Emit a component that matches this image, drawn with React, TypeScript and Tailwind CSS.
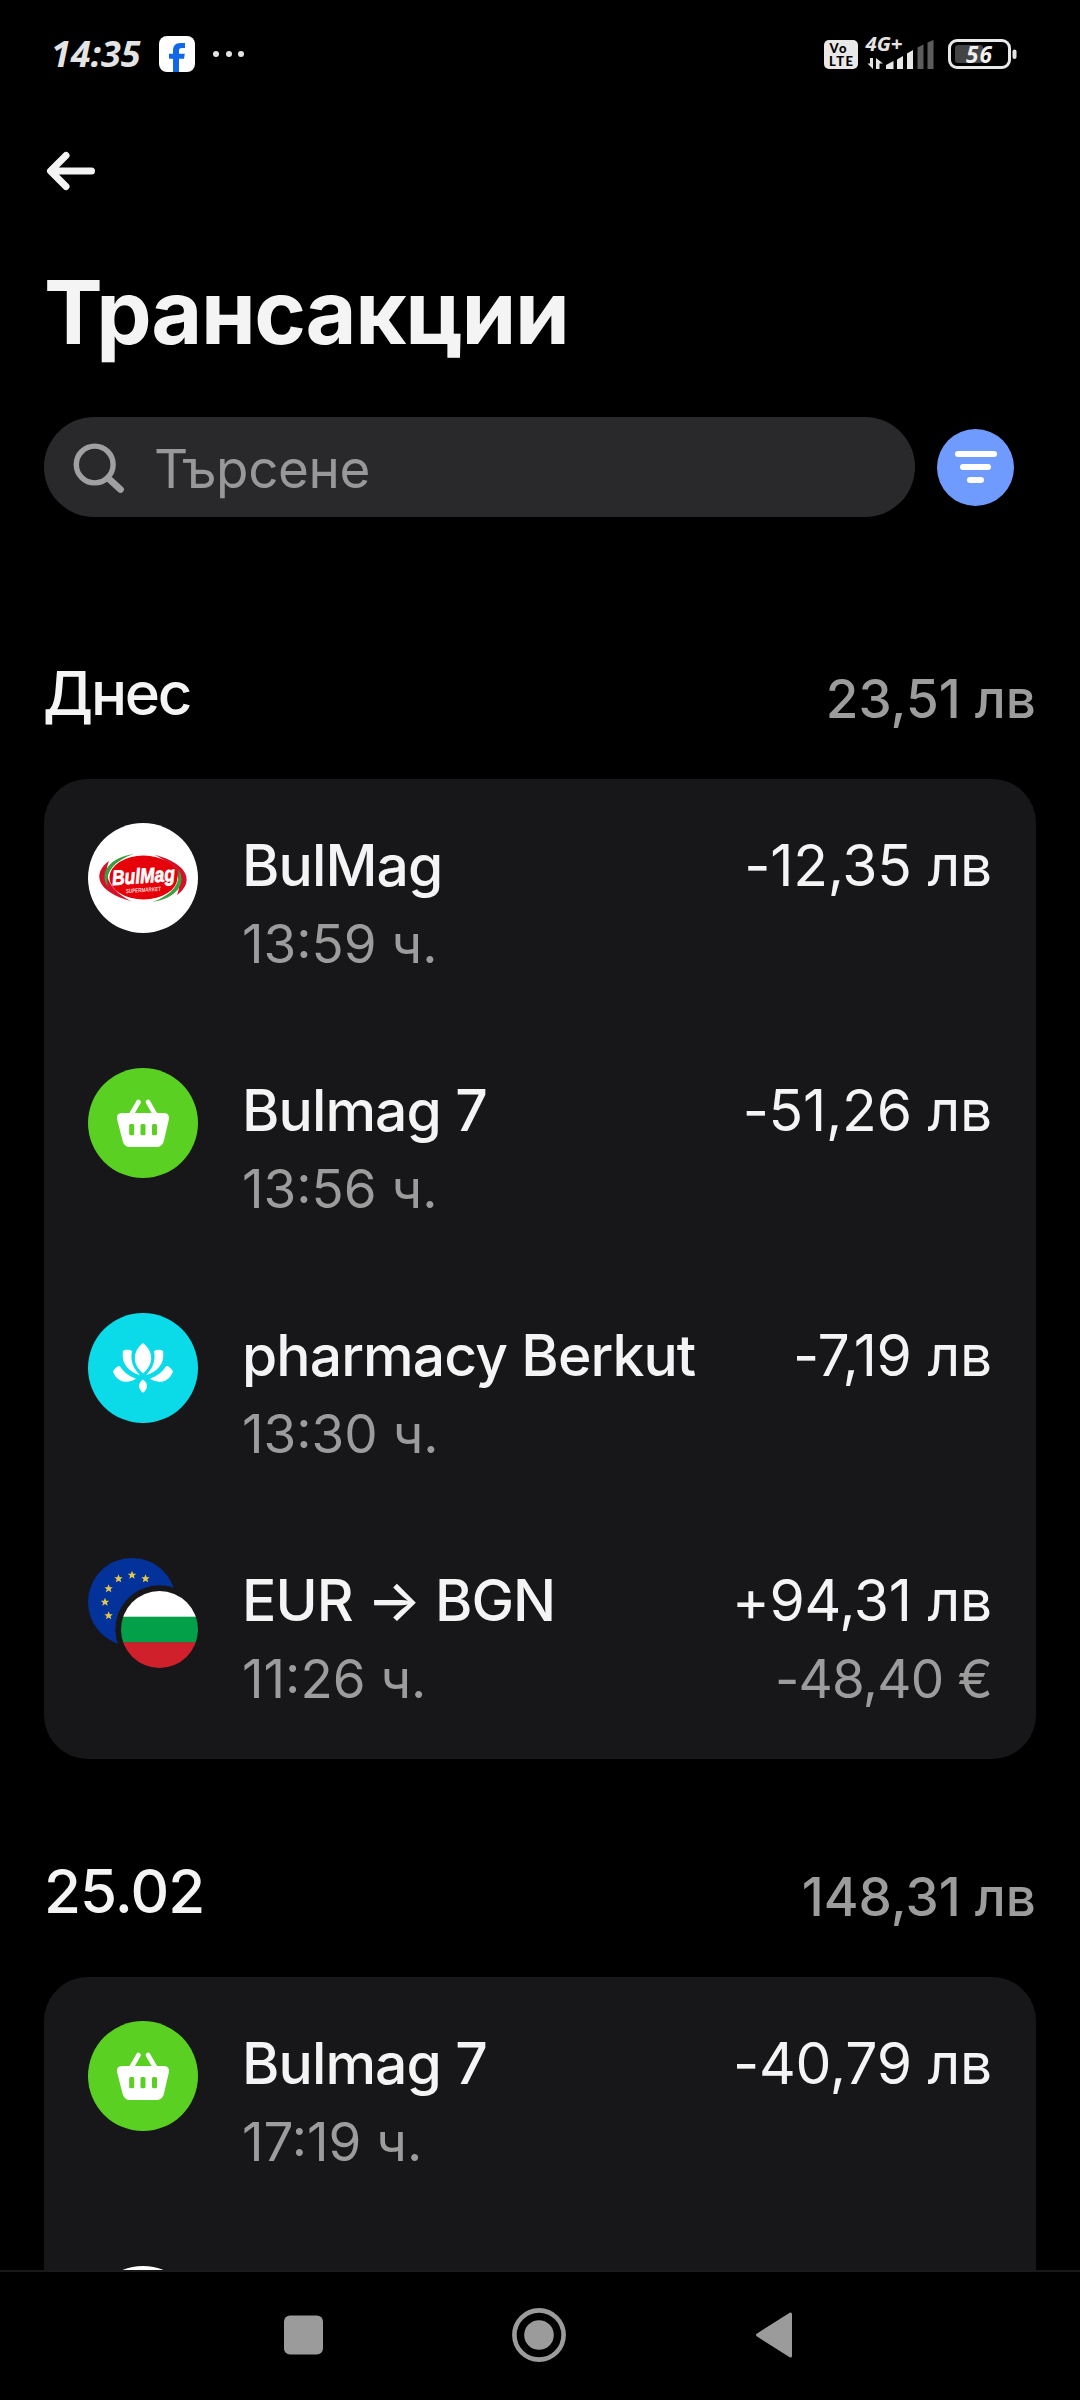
import React from "react";

type IconKind = "bulmag" | "basket" | "lotus" | "exchange" | "blank";

interface Transaction {
  icon: IconKind;
  title?: string;
  time?: string;
  amount?: string;
  subAmount?: string;
}

interface Day {
  label: string;
  labelClass: string;
  total: string;
  items: Transaction[];
}

const days: Day[] = [
  {
    label: "Днес",
    labelClass: "tracking-[-2.2px] -ml-px",
    total: "23,51 лв",
    items: [
      { icon: "bulmag", title: "BulMag", time: "13:59 ч.", amount: "-12,35 лв" },
      { icon: "basket", title: "Bulmag 7", time: "13:56 ч.", amount: "-51,26 лв" },
      { icon: "lotus", title: "pharmacy Berkut", time: "13:30 ч.", amount: "-7,19 лв" },
      { icon: "exchange", title: "EUR → BGN", time: "11:26 ч.", amount: "+94,31 лв", subAmount: "-48,40 €" },
    ],
  },
  {
    label: "25.02",
    labelClass: "tracking-[-0.9px]",
    total: "148,31 лв",
    items: [
      { icon: "basket", title: "Bulmag 7", time: "17:19 ч.", amount: "-40,79 лв" },
      { icon: "blank" },
    ],
  },
];

const StatusBar: React.FC = () => (
  <div className="flex h-[108px] shrink-0 items-center justify-between pl-[51px] pr-[63px] font-['Noto_Sans',sans-serif]">
    <div className="flex items-center">
      <span className="w-[108px] text-[36px] font-bold italic leading-[50px] text-[#e4e4e4]">14:35</span>
      <svg className="h-9 w-9" viewBox="0 0 36 36">
        <rect width="36" height="36" rx="8" fill="#fff" />
        <path
          d="M14 36V22.8h-4v-5h4v-2.6C14 9.700 16.500 7 21.300 7H26v5h-3c-2.300 0-3 .9-3 2.900v2.900h5.800l-.8 5h-5V36z"
          fill="#1267e8"
        />
      </svg>
      <div className="ml-[18px] flex gap-[6.500px]">
        <span className="h-1.5 w-1.5 rounded-full bg-[#e4e4e4]" />
        <span className="h-1.5 w-1.5 rounded-full bg-[#e4e4e4]" />
        <span className="h-1.5 w-1.5 rounded-full bg-[#e4e4e4]" />
      </div>
    </div>

    <svg className="h-[60px] w-[194px]" viewBox="823 24 194 60">
      {/* VoLTE */}
      <rect x="824" y="40" width="34" height="29" rx="5" fill="#e8e8e8" />
      <text x="829.500" y="53.300" fontSize="13" fontWeight="900" fill="#000" fontFamily="Lato" textLength="17">
        Vo
      </text>
      <text x="829" y="65.500" fontSize="13" fontWeight="900" fill="#000" fontFamily="Lato" textLength="24">
        LTE
      </text>
      {/* mobile network */}
      <text x="865.500" y="51" fontSize="20" fontWeight="700" fontStyle="italic" fill="#e4e4e4" textLength="37" lengthAdjust="spacingAndGlyphs">
        4G+
      </text>
      <path d="M873 58v11l-5.500-5.500h2.500V58zM876 69V58l7 5.500h-3.500V69z" fill="#e4e4e4" />
      <path d="M886 69v-4l7.500-4v8z" fill="#e8e8e8" />
      <path d="M897 69v-9.500l6-3.500v13z" fill="#e8e8e8" />
      <path d="M907 69V53.500l6-3.500v19z" fill="#e8e8e8" />
      <path d="M917.500 69V47.500l6-3v24.500z" fill="#5c5c5c" />
      <path d="M927.500 69V42.500l6-2.500v29z" fill="#5c5c5c" />
      {/* battery */}
      <rect x="949.500" y="40.500" width="60" height="27" rx="7.500" fill="none" stroke="#e8e8e8" strokeWidth="3" />
      <rect x="955" y="45" width="28" height="18" rx="3" fill="#444" />
      <rect x="1012.500" y="49.500" width="4" height="9.500" rx="2" fill="#e4e4e4" />
      <text x="966" y="62.800" fontSize="22.500" fontWeight="700" fontStyle="italic" fill="#efefef" textLength="26">
        56
      </text>
    </svg>
  </div>
);

const BulMagLogo: React.FC = () => (
  <svg className="h-full w-full" viewBox="0 0 110 110">
    <circle cx="55" cy="55" r="55" fill="#fff" />
    {/* crescents on both sides of the oval */}
    <path d="M21 38C4 50 8 69 44 78.500 24 69 14 54 21 38z" fill="#d3122a" />
    <path d="M46 31C22 34 10 50 20 64 17 50 25 38 46 31z" fill="#3c9f3f" />
    <path d="M66 31.500C102 41 106 60 89 72 96 56 86 41 66 31.500z" fill="#d3122a" />
    <path d="M64 79C88 76 100 60 90 46 93 60 85 72 64 79z" fill="#3c9f3f" />
    <ellipse cx="55.500" cy="54.500" rx="34" ry="22" fill="#e60009" />
    <g transform="rotate(-4 55 55)">
      <text
        x="24"
        y="60"
        fontFamily="Liberation Sans"
        fontSize="21"
        fontWeight="700"
        fontStyle="italic"
        fill="#fff"
        stroke="#fff"
        strokeWidth="0.7"
        textLength="63"
        lengthAdjust="spacingAndGlyphs"
      >
        BulMag
      </text>
      <text
        x="37"
        y="69"
        fontFamily="Liberation Sans"
        fontSize="6"
        fontWeight="700"
        fontStyle="italic"
        fill="#ffd9d0"
        textLength="35"
        lengthAdjust="spacingAndGlyphs"
      >
        SUPERMARKET
      </text>
    </g>
  </svg>
);

const BasketIcon: React.FC = () => (
  <svg className="h-full w-full" viewBox="0 0 110 110">
    <circle cx="55" cy="55" r="55" fill="#5ad022" />
    <path d="M50.500 34 43 47M60 34l7.500 13" stroke="#fff" strokeWidth="4.600" strokeLinecap="round" fill="none" />
    <path
      d="M34 45h42c3.800 0 5.600 2.800 4.900 6.200l-5 21.500C74.900 76.900 72 79 68 79H42.500c-4 0-6.900-2.100-7.900-6.300l-5.500-21.500C28.300 47.800 30.200 45 34 45z"
      fill="#fff"
    />
    <g fill="#5ad022">
      <rect x="41.200" y="56" width="5" height="11.200" rx="1.500" />
      <rect x="52.500" y="56" width="5" height="11.200" rx="1.500" />
      <rect x="64" y="56" width="5" height="11.200" rx="1.500" />
    </g>
  </svg>
);

const SidePetals: React.FC = () => (
  <>
    <path d="M36.500 37.200c2.800-.7 5.300-.4 7.500.8-1.800 8.500.3 16.500 8 24.200C40.500 58.500 33.500 51 34.800 39c.1-1 .7-1.600 1.700-1.800z" />
    <path d="M25.500 57.500c1.300-1.700 3-3.200 4.700-4.200.6-.4 1.400-.3 1.900.3C36 59.300 40.500 63 48 65.800 39 71.500 29 69 25.200 59c-.2-.5-.1-1 .3-1.500z" />
  </>
);

const LotusIcon: React.FC = () => (
  <svg className="h-full w-full" viewBox="0 0 110 110">
    <circle cx="55" cy="55" r="55" fill="#0bdbe8" />
    <g fill="#fff">
      <path d="M55 30c5 4 8.200 9 8.200 15S60 56 55 60.500C50 56 46.800 51 46.800 45S50 34 55 30z" />
      <SidePetals />
      <g transform="matrix(-1 0 0 1 110 0)">
        <SidePetals />
      </g>
      <path d="M55 66.500c2.600 1.700 4 4 4 6.500s-1.400 4.800-4 6.700c-2.600-1.900-4-4.200-4-6.700s1.400-4.800 4-6.500z" />
    </g>
  </svg>
);

const starAngles = [150, 180, 210, 240, 270, 300];

const ExchangeIcon: React.FC = () => (
  <svg className="h-full w-full" viewBox="0 0 110 110">
    <defs>
      <clipPath id="bg-flag">
        <circle cx="71.500" cy="71.500" r="38.500" />
      </clipPath>
    </defs>
    <circle cx="44" cy="44" r="44" fill="#03329b" />
    {starAngles.map((a) => {
      const rad = (a * Math.PI) / 180;
      return (
        <path
          key={a}
          d="M0-4.300 1.200-1.300 4.200-1.300 1.900.7 2.700 3.700 0 2.100-2.700 3.700-1.900.7-4.200-1.300-1.200-1.300z"
          fill="#e3c84d"
          transform={`translate(${44 + 27 * Math.cos(rad)} ${44 + 27 * Math.sin(rad)})`}
        />
      );
    })}
    <circle cx="71.500" cy="71.500" r="44.200" fill="#171719" />
    <g clipPath="url(#bg-flag)">
      <rect x="30" y="30" width="80" height="29" fill="#fff" />
      <rect x="30" y="58.700" width="80" height="26" fill="#04a049" />
      <rect x="30" y="84.300" width="80" height="26" fill="#d0202c" />
    </g>
  </svg>
);

const BlankIcon: React.FC = () => <div className="h-full w-full rounded-full bg-white" />;

const icons: Record<IconKind, React.FC> = {
  bulmag: BulMagLogo,
  basket: BasketIcon,
  lotus: LotusIcon,
  exchange: ExchangeIcon,
  blank: BlankIcon,
};

const TransactionRow: React.FC<{ item: Transaction }> = ({ item }) => {
  const Icon = icons[item.icon];
  return (
    <li className="flex h-[245px] shrink-0 items-start px-11 pt-11">
      <div className="h-[110px] w-[110px] shrink-0">
        <Icon />
      </div>
      <div className="ml-11 flex-1 pt-1">
        <p className="text-[57px] font-medium leading-[78px] tracking-[-0.9px] text-[#f4f4f4]">{item.title}</p>
        <p className="text-[53px] leading-[78px] text-[#9c9c9d]">{item.time}</p>
      </div>
      <div className="pt-1 text-right">
        <p className="text-[57px] leading-[78px] tracking-[-0.25px] text-[#f4f4f4]">{item.amount}</p>
        {item.subAmount && (
          <p className="text-[53px] leading-[78px] tracking-[-0.8px] text-[#9c9c9d]">{item.subAmount}</p>
        )}
      </div>
    </li>
  );
};

const App: React.FC = () => {
  return (
    <div className="flex h-[2400px] w-[1080px] flex-col overflow-hidden bg-black font-['Inter',sans-serif]">
      <div className="h-[2270px] shrink-0 overflow-hidden">
        <StatusBar />

        <header className="px-11 pt-[41px]">
          <button className="block">
            <svg className="h-11 w-[55px]" viewBox="44 149 55 44" fill="none" stroke="#f4f4f4" strokeWidth="7" strokeLinecap="round" strokeLinejoin="round">
              <path d="M66 155.500 50.500 171 66 186.500M51 171h40.500" />
            </svg>
          </button>
          <h1 className="mt-[64px] text-[88px] font-bold leading-[110px] tracking-[-1.4px] text-[#f4f4f4]">Трансакции</h1>

          <div className="mt-[50px] flex items-center">
            <div className="flex h-[100px] w-[871px] items-center rounded-full bg-[#29292b] pl-[28px]">
              <svg className="h-[55px] w-[55px]" viewBox="72 439 55 55" fill="none" stroke="#a0a0a1" strokeLinecap="round">
                <circle cx="94.700" cy="463.500" r="18.400" strokeWidth="5.400" />
                <path d="m108.500 477.500 12 11" strokeWidth="6.800" />
              </svg>
              <span className="ml-[27px] pt-1 text-[53px] leading-[78px] tracking-[-0.4px] text-[#98989a]">Търсене</span>
            </div>
            <button className="ml-[22px] flex h-[77px] w-[77px] flex-col items-center justify-center gap-[6.700px] rounded-full bg-[#6f9bfe]">
              <span className="h-1.5 w-[42px] rounded-full bg-white" />
              <span className="h-1.5 w-[31px] rounded-full bg-white" />
              <span className="h-1.5 w-[17px] rounded-full bg-white" />
            </button>
          </div>
        </header>

        <main className="px-11 pt-11">
          {days.map((day) => (
            <section key={day.label} className="pt-24">
              <div className="flex items-end justify-between">
                <h2 className={`text-[60px] font-medium leading-[72px] text-[#f4f4f4] ${day.labelClass}`}>{day.label}</h2>
                <span className="text-[53px] font-medium leading-[60px] text-[#9c9c9d]">{day.total}</span>
              </div>
              <ul className="mt-[50px] overflow-hidden rounded-[44px] bg-[#171719]">
                {day.items.map((item, i) => (
                  <TransactionRow key={i} item={item} />
                ))}
              </ul>
            </section>
          ))}
        </main>
      </div>

      <nav className="flex h-[130px] items-center justify-center border-t-2 border-[#1a1a1a] bg-black">
        <svg className="h-16 w-[520px]" viewBox="280 2304 520 64">
          <rect x="284" y="2315.500" width="39" height="39" rx="6" fill="#9b9b9b" />
          <circle cx="539" cy="2335" r="24.600" fill="none" stroke="#9b9b9b" strokeWidth="4.600" />
          <circle cx="539" cy="2335" r="14.800" fill="#9b9b9b" />
          <path d="M757.500 2335 790.500 2314v42z" fill="#9b9b9b" stroke="#9b9b9b" strokeWidth="3" strokeLinejoin="round" />
        </svg>
      </nav>
    </div>
  );
};

export default App;
